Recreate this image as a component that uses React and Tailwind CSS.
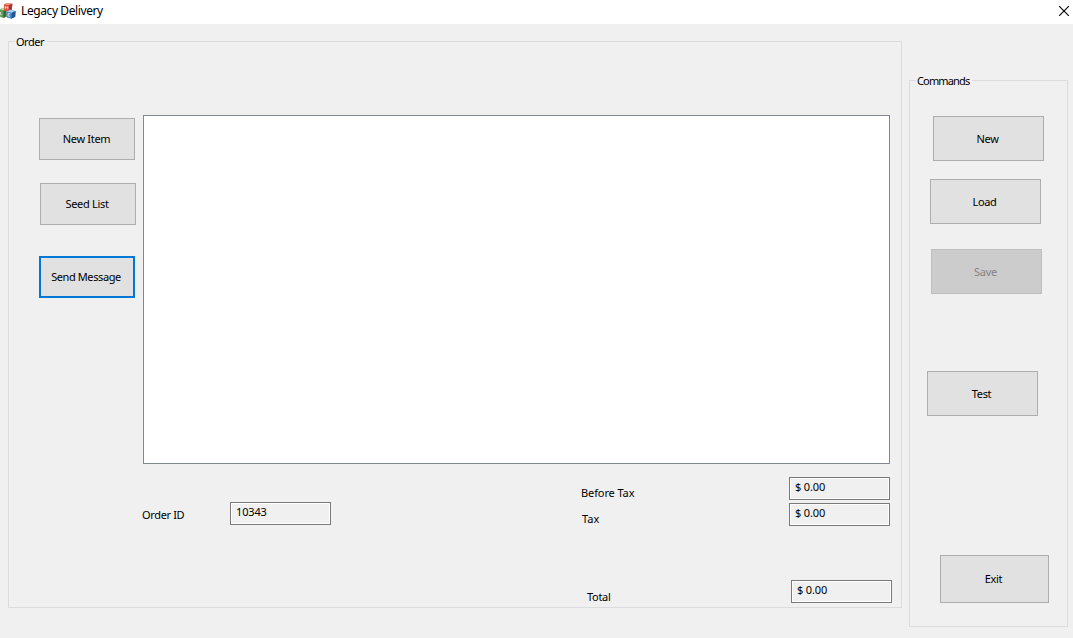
function AppIcon() {
  return (
    <svg width="16" height="17" viewBox="0 0 16 17" className="shrink-0">
      <path d="M0 6.2L2.8 4.8 6.5 6v7.4L3.4 15 0 13.8z" fill="#5f9a58" />
      <path d="M0 6.2L2.8 4.8 6.5 6 3.4 7.6z" fill="#b4d3a6" />
      <path d="M3.4 7.6L6.5 6v7.4L3.4 15z" fill="#2f6e3c" />
      <path d="M4 1.2L7.4 0l5 .8-.8 6.6-3.2 1.4L4 7.8z" fill="#d8543f" />
      <path d="M4 1.2L7.4 0l5 .8-3.2 1.3z" fill="#eda090" />
      <path d="M9.2 2.1L12.4.8l-.8 6.6-3.2 1.4z" fill="#b02f2a" />
      <path d="M6.6 8.4L10.4 6.8l5.2 1.2-.4 5.8-3.8 2L6.6 14.6z" fill="#4a8cca" />
      <path d="M6.6 8.4L10.4 6.8l5.2 1.2-3.8 1.8z" fill="#a9cfee" />
      <path d="M11.8 9.8L15.6 8l-.4 5.8-3.8 2z" fill="#235794" />
      <path d="M5.4 3.2v2.6M5.4 3.4l1.2 1.2 1.2-.8v2.4M10 10.9l-1.7-.4-.3 2.4 1.8.5M.6 9v2.6l1.2.4" fill="none" stroke="#f3ece9" strokeWidth=".8" />
    </svg>
  );
}

function Button({ className, children }) {
  return (
    <button className={`flex shrink-0 items-center justify-center whitespace-nowrap leading-4 ${className}`}>
      {children}
    </button>
  );
}

function Field({ className = "", children }) {
  return (
    <div className={`h-[23px] w-[101px] shrink-0 border border-[#7a7a7a] bg-[#f0f0f0] pl-[5px] pt-[2px] leading-[14px] tracking-[-0.15px] shadow-[inset_0_0_0_1px_#fff] ${className}`}>
      {children}
    </div>
  );
}

function Group({ title, titleClass, className, children }) {
  return (
    <section className={`relative shrink-0 border border-[#dcdcdc] ${className}`}>
      <h2 className={`absolute -top-[7px] left-[6px] bg-[#f0f0f0] pl-px pr-[3px] leading-[14px] ${titleClass}`}>{title}</h2>
      {children}
    </section>
  );
}

const plain = "border border-[#adadad] bg-[#e1e1e1]";

export default function App() {
  return (
    <div className="flex h-[638px] w-[1073px] flex-col overflow-hidden bg-[#f0f0f0] font-['Noto_Sans',sans-serif] text-[11px] text-black">
      <header className="flex h-6 shrink-0 items-start justify-between bg-white pr-1">
        <div className="flex pt-[3px]">
          <AppIcon />
          <h1 className="pl-[5px] text-[12px] leading-4 tracking-[-0.4px]">Legacy Delivery</h1>
        </div>
        <svg width="10" height="10" viewBox="0 0 10 10" className="mt-[6px]">
          <path d="M0 0l10 10M10 0L0 10" stroke="#000" strokeWidth="1.1" />
        </svg>
      </header>

      <main className="flex items-start gap-[7px] pl-2">
        <Group title="Order" titleClass="tracking-[-0.5px]" className="mt-[17px] h-[567px] w-[894px] pl-[30px] pt-[73px] tracking-[-0.3px]">
          <div className="flex gap-[7px]">
            <div className="flex w-[97px] flex-col pt-[3px]">
              <Button className={`h-[42px] w-24 pr-px ${plain}`}>New Item</Button>
              <Button className={`ml-px mt-[23px] h-[42px] w-24 pr-[2px] ${plain}`}>Seed List</Button>
              <Button className="mt-[31px] h-[42px] w-24 border-2 border-[#0078d7] bg-[#e1e1e1] pr-[2px] tracking-[-0.4px]">Send Message</Button>
            </div>
            <div className="h-[349px] w-[747px] border border-[#828790] bg-white" />
          </div>

          <div className="flex pl-[103px] pt-[13px]">
            <div className="flex h-[23px] w-[439px] pt-[25px]">
              <span className="w-[88px] shrink-0 pt-[6px] leading-[14px] tracking-[-0.35px]">Order ID</span>
              <Field>10343</Field>
            </div>
            <div className="flex flex-col">
              <div className="flex">
                <span className="w-[208px] pt-[9px] leading-[14px] tracking-[-0.1px]">Before Tax</span>
                <Field>$ 0.00</Field>
              </div>
              <div className="mt-[3px] flex">
                <span className="w-[208px] pl-px pt-[9px] leading-[14px] tracking-[0px]">Tax</span>
                <Field>$ 0.00</Field>
              </div>
              <div className="mt-[54px] flex pl-[5px]">
                <span className="w-[205px] pl-px pt-[10px] leading-[14px]">Total</span>
                <Field>$ 0.00</Field>
              </div>
            </div>
          </div>
        </Group>

        <Group title="Commands" titleClass="tracking-[-0.85px]" className="mt-[56px] flex h-[547px] w-[159px] flex-col pt-[35px] tracking-[-0.3px]">
          <Button className={`ml-[23px] h-[45px] w-[111px] pr-[2px] pt-px ${plain}`}>New</Button>
          <Button className={`ml-[20px] mt-[18px] h-[45px] w-[111px] pr-[2px] pt-px ${plain}`}>Load</Button>
          <Button className="ml-[21px] mt-[25px] h-[45px] w-[111px] border border-[#bfbfbf] bg-[#cccccc] pr-[2px] pt-px text-[#838383]">Save</Button>
          <Button className={`ml-[17px] mt-[77px] h-[45px] w-[111px] pr-[2px] pt-px ${plain}`}>Test</Button>
          <Button className={`ml-[30px] mt-[139px] h-[48px] w-[109px] pr-[2px] ${plain}`}>Exit</Button>
        </Group>
      </main>
    </div>
  );
}
